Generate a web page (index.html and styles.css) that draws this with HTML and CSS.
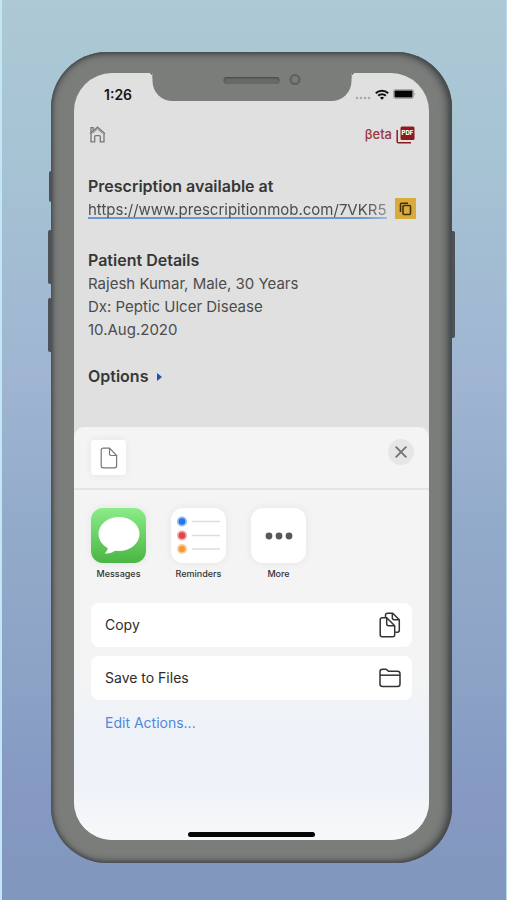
FILE: index.html
```html
<!DOCTYPE html>
<html lang="en">
<head>
<meta charset="utf-8">
<meta name="viewport" content="width=device-width, initial-scale=1">
<title>Prescription</title>
<link rel="stylesheet" href="styles.css">
</head>
<body>
<div class="phone">
  <span class="side side-mute"></span>
  <span class="side side-up"></span>
  <span class="side side-down"></span>
  <span class="side side-power"></span>
  <div class="notch"><span class="speaker"></span><span class="camera"></span></div>
  <div class="screen">
    <main class="page">
      <div class="status">
        <span class="time">1:26</span>
        <span class="signals">
          <svg width="16" height="4" viewBox="0 0 16 4" fill="#aaa"><circle cx="2" cy="2" r="1.3"/><circle cx="6" cy="2" r="1.3"/><circle cx="10" cy="2" r="1.3"/><circle cx="14" cy="2" r="1.3"/></svg>
          <svg width="14" height="11" viewBox="0 0 14 11" fill="none" stroke="#111" stroke-width="2"><path d="M.8 4.2a8.800 8.800 0 0 1 12.400 0M3.200 6.800a5.400 5.400 0 0 1 7.600 0"/><path d="M7 10.800 4.900 8.700a3 3 0 0 1 4.200 0z" fill="#111" stroke="none"/></svg>
          <svg width="23" height="10" viewBox="0 0 23 10"><rect x=".5" y=".5" width="20" height="9" rx="1.5" fill="none" stroke="#aaa"/><rect x="1.5" y="1.5" width="18" height="7" rx=".8" fill="#050505"/><path d="M21.5 3.2q1.5 1.8 0 3.6z" fill="#888"/></svg>
        </span>
      </div>
      <nav class="toolbar">
        <a href="#home" aria-label="Home"><svg width="17" height="17" viewBox="0 0 17 17" fill="none" stroke="#777" stroke-width="1.3"><path d="M1 7.7 8.500 1.200 16 7.700M2 6.800V1.600h2.200v3M2 7.500v8.400h3.700v-5.200q0-1.100 1.100-1.100h3.400q1.100 0 1.100 1.100v5.200H15V7.500"/><path d="M3.500 7.400 8.500 3l5 4.400" stroke-width=".8"/></svg></a>
        <a class="beta" href="#pdf">βeta
          <svg width="19" height="18" viewBox="0 0 19 18" aria-hidden="true"><rect x="4.5" y=".5" width="14" height="13.5" rx="1.5" fill="#8c1b1e"/><path d="M1.200 4v11.500q0 1.300 1.300 1.300H15" fill="none" stroke="#8c1b1e" stroke-width="1.500"/><text class="pdf" x="11.5" y="9.3" text-anchor="middle">PDF</text></svg>
        </a>
      </nav>
      <section class="available">
        <h2>Prescription available at</h2>
        <div class="link-row">
          <a class="link" href="#prescription">https://www.prescripitionmob.com/7VKR5</a>
          <button class="copy-link" aria-label="Copy link"><svg width="13" height="14" viewBox="0 0 13 14" fill="none" stroke="#41300b" stroke-width="1.6"><rect x="4" y="3.5" width="7.500" height="9" rx="1"/><path d="M1.500 10V2.200q0-1 1-1H9"/></svg></button>
        </div>
      </section>
      <section class="patient">
        <h2>Patient Details</h2>
        <p>Rajesh Kumar, Male, 30 Years</p>
        <p>Dx: Peptic Ulcer Disease</p>
        <p>10.Aug.2020</p>
      </section>
      <button class="options">Options <svg width="5" height="8" viewBox="0 0 5 8" fill="#1d50b8"><path d="M0 0l5 4-5 4z"/></svg></button>
    </main>
    <div class="sheet">
      <header class="sheet-head">
        <span class="file"><svg width="18" height="22" viewBox="0 0 18 22" fill="none" stroke="#777" stroke-width="1.2"><path d="M3.200 1.200h6.300L16.600 8.500v10.300q0 2-2 2H3.200q-2 0-2-2V3.200q0-2 2-2z"/><path d="M9.500 1.200v5.600q0 1.700 1.700 1.700h5.400"/></svg></span>
        <button class="close" aria-label="Close"><svg width="12" height="12" viewBox="0 0 12 12" stroke="#747476" stroke-width="1.9" stroke-linecap="round"><path d="M1.200 1.200l9.600 9.600M10.800 1.200 1.200 10.800"/></svg></button>
      </header>
      <div class="apps">
        <button class="app"><span class="icon messages"><svg width="42" height="38" viewBox="0 0 42 38" fill="#fff"><ellipse cx="21" cy="17" rx="20.5" ry="17"/><path d="M10 29q0 5-3.500 7.500Q14 37 19 32z"/></svg></span>Messages</button>
        <button class="app"><span class="icon"><svg width="55" height="55" viewBox="0 0 55 55"><g stroke="#dedee0" stroke-width="1.3"><path d="M21 13.500h28M21 27.500h28M21 41h28"/></g><circle cx="11" cy="13.5" r="5" fill="#8dbbf4"/><circle cx="11" cy="13.5" r="3.2" fill="#2277e4"/><circle cx="11" cy="27.5" r="5" fill="#f2a3a2"/><circle cx="11" cy="27.5" r="3.2" fill="#dd4547"/><circle cx="11" cy="41" r="5" fill="#f9cf98"/><circle cx="11" cy="41" r="3.2" fill="#ef9d3d"/></svg></span>Reminders</button>
        <button class="app"><span class="icon"><svg width="28" height="8" viewBox="0 0 28 8" fill="#58585a"><circle cx="4" cy="4" r="3.4"/><circle cx="14" cy="4" r="3.4"/><circle cx="24" cy="4" r="3.4"/></svg></span>More</button>
      </div>
      <div class="actions">
        <button class="action">Copy <svg width="22" height="26" viewBox="0 0 22 26" fill="none" stroke="#333" stroke-width="1.5" stroke-linejoin="round"><path d="M6.500 5.500V3.200q0-2 2-2h5.200l6.600 6.500v10.600q0 2-2 2h-2"/><path d="M13.300 1.500v4.300q0 1.900 1.900 1.900h5"/><path d="M3.200 5.700h4.500l8 8v9.100q0 2-2 2H3.200q-2 0-2-2V7.700q0-2 2-2z"/><path d="M7.700 5.700v6q0 2 2 2h6"/></svg></button>
        <button class="action">Save to Files <svg width="22" height="20" viewBox="0 0 22 20" fill="none" stroke="#333" stroke-width="1.5" stroke-linejoin="round"><path d="M1 16V3.800Q1 1.300 3.500 1.300h3q1 0 1.700.8l.7.600q.5.600 1.500.6h8.100q2.500 0 2.500 2.500V16q0 2.500-2.500 2.500h-15Q1 18.500 1 16z"/><path d="M1 7.200h20"/></svg></button>
      </div>
      <a class="edit" href="#edit">Edit Actions...</a>
      <span class="indicator"></span>
    </div>
  </div>
</div>
</body>
</html>
```
FILE: styles.css
```css
* { box-sizing: border-box; }

body {
  margin: 0;
  min-height: 100vh;
  padding: 52px 54px 37px 49px;
  border-left: 2px solid #c3e6f6;
  border-right: 1px solid #b9d8ec;
  background: linear-gradient(#adc9d5, #a6c3d3 18%, #9fb5d2 42%, #93abca 58%, #8da3c6 74%, #8599c2 88%, #8297bd);
  font-family: Inter, "Liberation Sans", sans-serif;
  color: #4c4c4c;
}

h2, p { margin: 0; }
button { border: 0; padding: 0; background: none; font: inherit; color: inherit; }
a { color: inherit; text-decoration: none; }
svg { display: block; flex: none; }

.phone {
  position: relative;
  padding: 21px 23px 23px;
  border-radius: 56px;
  background: #7b7d7b;
  box-shadow: inset 0 0 3px 1px #4a4e50, inset -4px 0 9px 0 #3f4344, inset 1px 0 7px 0 #505354;
}

.side { position: absolute; z-index: -1; left: -3px; width: 6px; border-radius: 2px; background: #4c5257; }
.side-mute { top: 119px; left: -2px; height: 31px; }
.side-up { top: 178px; height: 54px; }
.side-down { top: 246px; height: 54px; }
.side-power { top: 179px; left: auto; right: -3px; height: 107px; }

.notch {
  position: absolute;
  z-index: 1;
  top: 20px;
  left: 50%;
  width: 199px;
  height: 29px;
  transform: translateX(-50%);
  border-radius: 0 0 20px 20px;
  background: #7b7d7b;
}
.notch::before, .notch::after {
  content: "";
  position: absolute;
  top: 1px;
  width: 5px;
  height: 5px;
}
.notch::before { right: 100%; background: radial-gradient(circle at 0 100%, #0000 5px, #7b7d7b 5px); }
.notch::after { left: 100%; background: radial-gradient(circle at 100% 100%, #0000 5px, #7b7d7b 5px); }
.speaker { position: absolute; top: 5px; left: 71px; width: 56px; height: 7px; border-radius: 4px; background: #686a69; box-shadow: inset 0 1px 2px #444; }
.camera { position: absolute; top: 2px; left: 137px; width: 11px; height: 11px; border: 2px solid #5c5f5e; border-radius: 50%; background: #777a78; }

.screen { overflow: hidden; border-radius: 38px; background: #e0e0e0; }

.page { padding: 12px 13px 39px 14px; font-size: 15px; line-height: 23px; }
.status { display: flex; justify-content: space-between; align-items: center; height: 18px; padding: 0 0 0 16px; }
.time { font-size: 14px; font-weight: 600; color: #151515; }
.signals { display: flex; align-items: center; gap: 4px; }
.signals svg:first-child { align-self: flex-end; }
.toolbar { display: flex; justify-content: space-between; align-items: center; margin: 20px 0 29px; padding: 0 1px; height: 23px; }
.beta { display: flex; align-items: center; gap: 4px; font-size: 13px; font-weight: 500; color: #98383b; }
.pdf { font-size: 6px; font-weight: 800; fill: #fff; }

.available { margin-bottom: 28px; }
.patient { margin-bottom: 24px; }
h2, .options { font-size: 16px; font-weight: 600; line-height: 23px; color: #373737; }
.link-row { display: flex; justify-content: space-between; height: 23px; }
.link {
  white-space: nowrap;
  height: 21px;
  border-bottom: 2px solid #6799cf;
  -webkit-mask-image: linear-gradient(90deg, #000 92%, #0008);
  mask-image: linear-gradient(90deg, #000 92%, #0008);
}
.copy-link { display: grid; place-items: center; flex: none; width: 21px; height: 21px; background: #d9ab3c; }
.options { display: flex; align-items: center; gap: 9px; }

.sheet {
  display: flex;
  flex-direction: column;
  border-radius: 10px 10px 0 0;
  background: linear-gradient(#f4f4f4 58%, #edf2f9 76%, #eff3f8 88%, #f7f8f9);
}
.sheet-head { display: flex; justify-content: space-between; align-items: flex-start; padding: 13px 15px 13px 17px; border-bottom: 2px solid #e4e4e4; }
.file { display: grid; place-items: center; width: 35px; height: 35px; border-radius: 3px; background: #fff; box-shadow: 0 0 8px #0001; }
.close { display: grid; place-items: center; width: 26px; height: 26px; margin-top: -1px; border-radius: 50%; background: #e6e6e7; }

.apps { display: flex; gap: 25px; padding: 18px 17px 0; }
.app { display: flex; flex-direction: column; align-items: center; gap: 4px; width: 55px; font-size: 9px; font-weight: 500; line-height: 13px; color: #333; }
.icon { display: grid; place-items: center; width: 55px; height: 55px; border-radius: 12px; background: #fff; box-shadow: 0 0 9px #0001; }
.messages { background: linear-gradient(#8aec87, #4ab643); }

.actions { display: grid; gap: 9px; padding: 23px 17px 0; }
.action { display: flex; justify-content: space-between; align-items: center; height: 44px; padding: 0 11px 1px 14px; border-radius: 8px; background: #fff; font-size: 14px; color: #2c2c2c; }
.edit { align-self: flex-start; margin: 13px 31px 0; font-size: 14px; line-height: 20px; color: #4c88e0; }
.indicator { align-self: center; width: 127px; height: 5px; margin: 99px 0 3px; border-radius: 3px; background: #050505; }
```
